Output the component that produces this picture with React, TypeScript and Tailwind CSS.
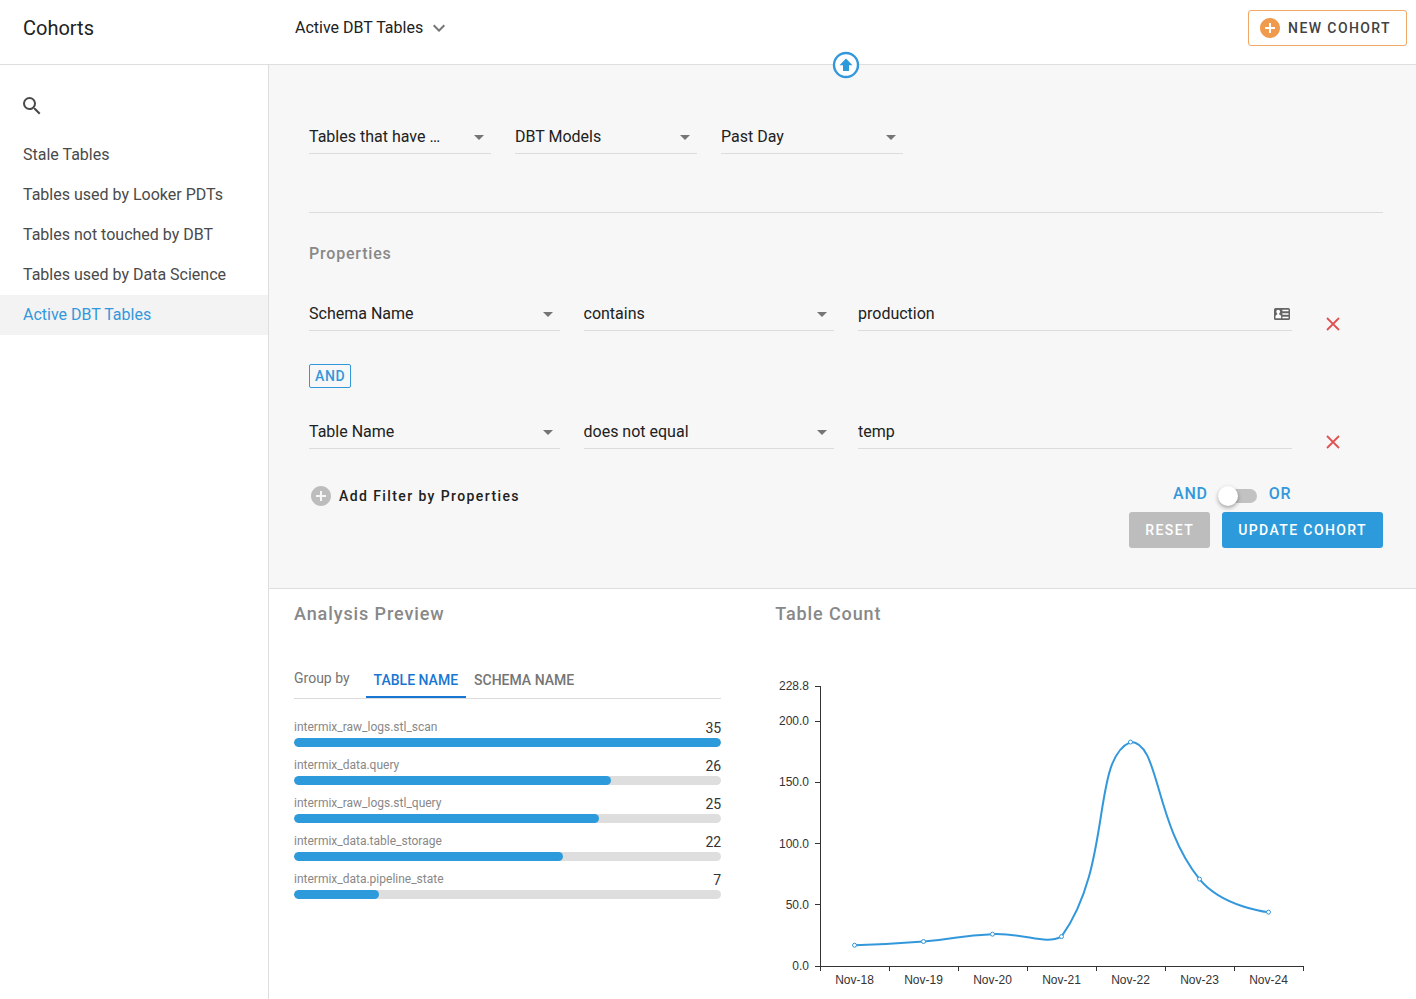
import { useState } from 'react';
import { MdAddCircle, MdArrowDropDown, MdExpandMore, MdSearch } from 'react-icons/md';

const cohorts = [
  'Stale Tables',
  'Tables used by Looker PDTs',
  'Tables not touched by DBT',
  'Tables used by Data Science',
  'Active DBT Tables',
];

const groups = [
  { name: 'intermix_raw_logs.stl_scan', count: 35 },
  { name: 'intermix_data.query', count: 26 },
  { name: 'intermix_raw_logs.stl_query', count: 25 },
  { name: 'intermix_data.table_storage', count: 22 },
  { name: 'intermix_data.pipeline_state', count: 7 },
];

const series = [
  { day: 'Nov-18', value: 17 },
  { day: 'Nov-19', value: 20 },
  { day: 'Nov-20', value: 26 },
  { day: 'Nov-21', value: 24 },
  { day: 'Nov-22', value: 183 },
  { day: 'Nov-23', value: 71 },
  { day: 'Nov-24', value: 44 },
];

interface SelectProps {
  label: string;
  value: string;
  options?: string[];
}

function Select({ label, value, options = [] }: SelectProps) {
  return (
    <div className="relative">
      <select
        aria-label={label}
        defaultValue={value}
        className="block h-8 w-full appearance-none border-b border-[#dcdcdc] bg-transparent pr-6 pb-0.5 text-base text-[#212121] outline-none"
      >
        {[value, ...options].map((o) => (
          <option key={o}>{o}</option>
        ))}
      </select>
      <MdArrowDropDown className="pointer-events-none absolute top-[3px] right-0 size-6 text-[#757575]" />
    </div>
  );
}

function ContactCardIcon() {
  return (
    <svg viewBox="0 0 16 12" className="pointer-events-none absolute top-[9px] right-[2px] h-3 w-4">
      <rect width="16" height="12" rx="1.6" fill="#666" />
      <circle cx="4.2" cy="3.7" r="1.9" fill="#fff" />
      <path d="M3.3 5h1.8v1.6c1 .3 2 .8 2 2v1.6H1.5V8.6c0-1.2.9-1.7 1.8-2z" fill="#fff" />
      <path d="M8.4 2.5h6.1M8.4 6h6.1M8.4 9.5h6.1" stroke="#fff" strokeWidth="1.6" />
    </svg>
  );
}

interface FilterRowProps {
  field: string;
  operator: string;
  value: string;
  withCard?: boolean;
}

function FilterRow({ field, operator, value, withCard }: FilterRowProps) {
  return (
    <div className="grid grid-cols-12 gap-x-6">
      <div className="col-span-3">
        <Select label="Property" value={field} />
      </div>
      <div className="col-span-3">
        <Select label="Operator" value={operator} />
      </div>
      <div className="relative col-span-5">
        <input
          aria-label={`${field} value`}
          defaultValue={value}
          className="block h-8 w-full border-b border-[#dcdcdc] bg-transparent pr-6 pb-0.5 text-base text-[#212121] outline-none"
        />
        {withCard && <ContactCardIcon />}
      </div>
      <button aria-label="Remove filter" className="ml-[7px] flex w-5 items-end justify-center text-[#e05252]">
        <svg viewBox="0 0 14 14" className="size-3.5 shrink-0">
          <path d="M1 1l12 12M13 1L1 13" stroke="currentColor" strokeWidth="1.8" />
        </svg>
      </button>
    </div>
  );
}

// plot area inside the svg
const left = 45;
const top = 16;
const bottom = 296;
const step = 69;
const maxValue = 228.8;

const toX = (i: number) => left + step * (i + 0.5);
const toY = (v: number) => bottom - (v / maxValue) * (bottom - top);

function smoothPath(points: number[][]) {
  const ys = points.map((p) => p[1]);
  const clamp = (y: number) => Math.max(Math.min(...ys), Math.min(Math.max(...ys), y));
  const last = points.length - 1;

  // incoming and outgoing control point for each point
  const controls = points.map(([x, y], i) => {
    if (i === 0 || i === last) return { cin: [x, y], out: [x, y] };
    const [px, py] = points[i - 1];
    const [nx, ny] = points[i + 1];
    const prevLen = Math.hypot(x - px, y - py);
    const nextLen = Math.hypot(nx - x, ny - y);
    const ratio = nextLen / (prevLen + nextLen);
    return {
      cin: [x - (nx - px) * 0.5 * (1 - ratio), clamp(y - (ny - py) * 0.5 * (1 - ratio))],
      out: [x + (nx - px) * 0.5 * ratio, clamp(y + (ny - py) * 0.5 * ratio)],
    };
  });

  return points
    .map((p, i) => (i === 0 ? `M${p}` : `C${controls[i - 1].out} ${controls[i].cin} ${p}`))
    .join(' ');
}

function TableCountChart() {
  const points = series.map((s, i) => [toX(i), toY(s.value)]);
  const right = left + step * series.length;

  return (
    <svg viewBox="0 0 530 320" className="mt-[42px] w-[530px] max-w-full font-['Liberation_Sans',sans-serif] text-xs">
      <g stroke="#333" shapeRendering="crispEdges">
        <line x1={left} y1={top} x2={left} y2={bottom} />
        <line x1={left} y1={bottom} x2={right} y2={bottom} />
        {[0, 50, 100, 150, 200, maxValue].map((v) => (
          <line key={v} x1={left - 5} y1={toY(v)} x2={left} y2={toY(v)} />
        ))}
        {Array.from({ length: series.length + 1 }, (_, i) => (
          <line key={i} x1={left + step * i} y1={bottom} x2={left + step * i} y2={bottom + 5} />
        ))}
      </g>
      <g fill="#333">
        {[0, 50, 100, 150, 200, maxValue].map((v) => (
          <text key={v} x={left - 11} y={toY(v) + 4} textAnchor="end">
            {v.toFixed(1)}
          </text>
        ))}
        {series.map((s, i) => (
          <text key={s.day} x={toX(i)} y={bottom + 18} textAnchor="middle">
            {s.day}
          </text>
        ))}
      </g>
      <path d={smoothPath(points)} fill="none" stroke="#3398db" strokeWidth="2" />
      {points.map(([x, y]) => (
        <circle key={x} cx={x} cy={y} r="2" fill="#fff" stroke="#3398db" />
      ))}
    </svg>
  );
}

export default function App() {
  const [active, setActive] = useState('Active DBT Tables');
  const [tab, setTab] = useState('TABLE NAME');
  const [matchAny, setMatchAny] = useState(false);

  return (
    <div className="flex min-h-screen flex-col bg-white font-[Roboto,sans-serif] text-[#212121]">
      <header className="h-[65px] border-b border-[#dedede]">
        <div className="flex h-14 items-center pr-[9px]">
          <h1 className="w-[295px] pl-[23px] text-xl">Cohorts</h1>
          <button className="flex items-center gap-1 text-base">
            Active DBT Tables
            <MdExpandMore className="size-6 text-[#757575]" />
          </button>
          <button className="ml-auto flex h-9 items-center gap-1.5 rounded-[3px] border border-[#f0a868] pr-[15px] pl-[9px] text-sm font-medium tracking-widest text-[#424242]">
            <MdAddCircle className="size-6 text-[#ef9a4d]" />
            NEW COHORT
          </button>
        </div>
      </header>

      <div className="flex flex-1">
        <nav className="w-[269px] shrink-0 border-r border-[#dedede] pt-[29px]">
          <button aria-label="Search cohorts" className="ml-5 block text-[#4a4a4a]">
            <MdSearch className="size-6" />
          </button>
          <ul className="mt-[17px]">
            {cohorts.map((c) => (
              <li key={c}>
                <button
                  onClick={() => setActive(c)}
                  className={`block h-10 w-full pl-[23px] text-left text-base ${
                    active === c ? 'bg-[#f3f3f3] text-[#3398db]' : 'text-[#4a4a4a]'
                  }`}
                >
                  {c}
                </button>
              </li>
            ))}
          </ul>
        </nav>

        <main className="min-w-0 flex-1">
          <section className="relative border-b border-[#dedede] bg-[#f7f7f7] pt-[57px] pr-[33px] pb-10 pl-10">
            <button aria-label="Collapse" className="absolute -top-[14px] left-1/2 -ml-[11px]">
              <svg viewBox="0 0 28 28" className="size-7">
                <circle cx="14" cy="14" r="12" fill="#fff" stroke="#3398db" strokeWidth="2.4" />
                <path d="M14 7.5l6.5 6.8h-3.5v5.7h-6v-5.7H7.5z" fill="#2d9bdb" />
              </svg>
            </button>

            <div className="grid grid-cols-[repeat(3,182px)] gap-6">
              <Select label="Activity" value="Tables that have …" />
              <Select label="Source" value="DBT Models" />
              <Select label="Period" value="Past Day" />
            </div>

            <hr className="mt-[58px] border-[#dcdcdc]" />

            <h2 className="mt-[29px] mb-[33px] text-base font-medium tracking-wider text-[#888]">Properties</h2>

            <FilterRow field="Schema Name" operator="contains" value="production" withCard />
            <div className="mt-[33px] mb-[29px] flex">
              <span className="flex h-6 items-center rounded-xs border border-[#3398db] px-[5px] text-sm font-medium tracking-wider text-[#3398db]">
                AND
              </span>
            </div>
            <FilterRow field="Table Name" operator="does not equal" value="temp" />

            <div className="mt-[33px] grid h-6 grid-cols-12 gap-x-6">
              <button className="col-span-6 flex items-center gap-1.5 text-sm font-medium tracking-widest">
                <MdAddCircle className="size-6 text-[#bdbdbd]" />
                Add Filter by Properties
              </button>
              <label className="relative col-span-5 flex items-center justify-end text-base font-medium tracking-wider text-[#3398db]">
                <span className="pb-1">AND</span>
                <input
                  type="checkbox"
                  role="switch"
                  checked={matchAny}
                  onChange={(e) => setMatchAny(e.target.checked)}
                  className="sr-only"
                />
                <span
                  className={`mr-3 ml-3.5 flex h-3.5 w-[35px] items-center rounded-full bg-[#c2c2c2] ${
                    matchAny ? 'justify-end' : ''
                  }`}
                >
                  <span className="-mx-1 size-5 rounded-full bg-white shadow-[0_2px_4px_rgba(0,0,0,0.35)]" />
                </span>
                <span className="pb-1">OR</span>
              </label>
            </div>

            <div className="mt-1.5 flex justify-end gap-3 text-sm font-medium tracking-widest text-white">
              <button className="h-9 rounded-[3px] bg-[#bdbdbd] px-4">RESET</button>
              <button className="h-9 rounded-[3px] bg-[#2d9bdb] px-4">UPDATE COHORT</button>
            </div>
          </section>

          <section className="grid grid-cols-[2fr_3fr] gap-[54px] pt-[11px] pl-[25px]">
            <div>
              <h2 className="text-lg font-medium tracking-wider text-[#888]">Analysis Preview</h2>
              <div className="mt-[34px] flex border-b border-[#dcdcdc] text-sm">
                <span className="mr-4 leading-8 text-[#757575]">Group by</span>
                {['TABLE NAME', 'SCHEMA NAME'].map((t) => (
                  <button
                    key={t}
                    onClick={() => setTab(t)}
                    className={`h-9 border-b-2 px-2 pt-0.5 font-medium ${
                      tab === t ? 'border-[#1976d2] text-[#1976d2]' : 'border-transparent text-[#757575]'
                    }`}
                  >
                    {t}
                  </button>
                ))}
              </div>
              <ul className="mt-[19px] space-y-[9px]">
                {groups.map((g) => (
                  <li key={g.name}>
                    <div className="flex h-5 justify-between">
                      <span className="text-xs leading-[18px] text-[#888]">{g.name}</span>
                      <span className="text-sm text-[#333]">{g.count}</span>
                    </div>
                    <div className="h-[9px] overflow-hidden rounded-full bg-[#dedede]">
                      <div className="h-full rounded-full bg-[#2d9bdb]" style={{ width: `${(g.count / 35) * 100}%` }} />
                    </div>
                  </li>
                ))}
              </ul>
            </div>

            <div>
              <h2 className="text-lg font-medium tracking-wider text-[#888]">Table Count</h2>
              <TableCountChart />
            </div>
          </section>
        </main>
      </div>
    </div>
  );
}
